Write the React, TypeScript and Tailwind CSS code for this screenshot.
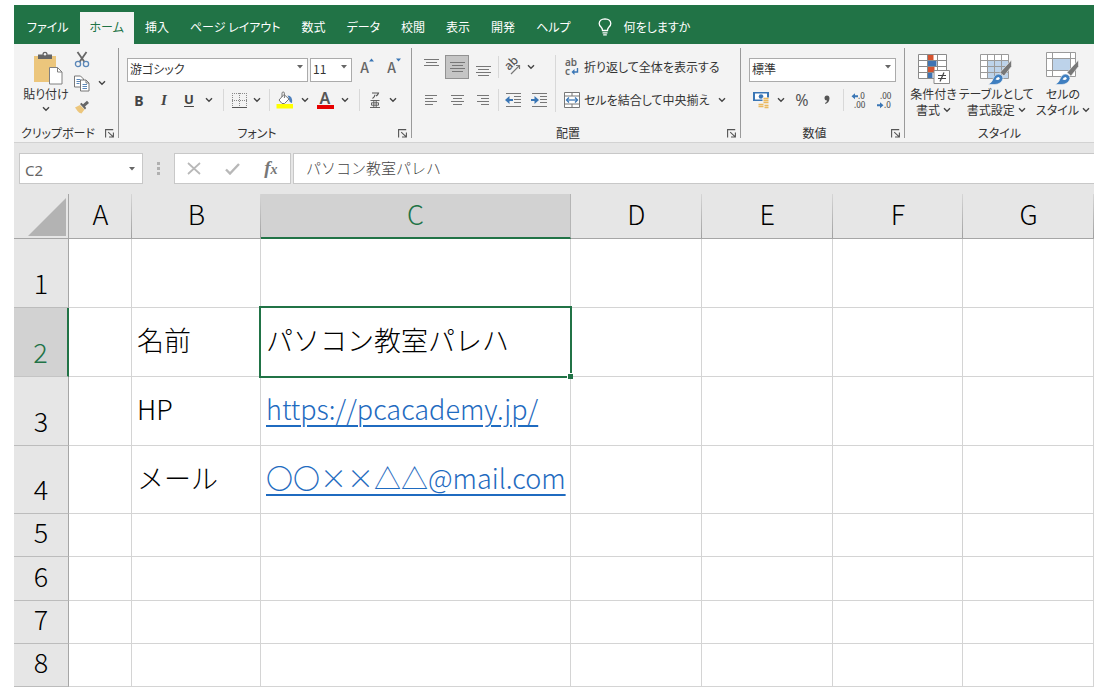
import type { ReactNode } from "react";

const JP = "font-['Noto_Sans_CJK_JP',sans-serif]";

function Chevron() {
  return (
    <svg width="8" height="6" viewBox="0 0 8 6" fill="none" stroke="#444" strokeWidth="1.4" aria-hidden="true">
      <path d="M1 1.2 4 4.2 7 1.2" />
    </svg>
  );
}

function Caret() {
  return (
    <svg width="6" height="4" viewBox="0 0 6 4" fill="#666" aria-hidden="true">
      <path d="M0 0h6L3 3.6z" />
    </svg>
  );
}

type BtnProps = { label: string; width?: string; active?: boolean; children: ReactNode };

function IconButton({ label, width = "w-6", active, children }: BtnProps) {
  return (
    <button
      type="button"
      aria-label={label}
      className={`flex h-6 shrink-0 items-center justify-center ${width} ${active ? "border border-[#929292] bg-[#c5c5c5]" : ""}`}
    >
      {children}
    </button>
  );
}

function MenuArrow({ label, width = "w-4" }: { label: string; width?: string }) {
  return (
    <IconButton label={label} width={width}>
      <Chevron />
    </IconButton>
  );
}

function Separator({ width = "w-2", height = "h-[22px]" }: { width?: string; height?: string }) {
  return (
    <span className={`flex shrink-0 justify-center ${width}`}>
      <span className={`w-px bg-[#d8d8d8] ${height}`} />
    </span>
  );
}

function Combo({ label, value, width, options }: { label: string; value: string; width: string; options: string[] }) {
  return (
    <span className={`relative block h-6 ${width}`}>
      <select
        aria-label={label}
        defaultValue={value}
        className="h-full w-full appearance-none border border-[#ababab] bg-white pr-4 pb-px pl-[2px] text-[12px] leading-5 text-[#333]"
      >
        {options.map((o) => (
          <option key={o}>{o}</option>
        ))}
      </select>
      <span className="pointer-events-none absolute top-[10px] right-[5px]">
        <Caret />
      </span>
    </span>
  );
}

function Launcher({ label }: { label: string }) {
  return (
    <button type="button" aria-label={label} className="flex h-4 w-4 shrink-0 items-center justify-center">
      <svg width="10" height="9" viewBox="0 0 10 9" fill="none" stroke="#555" strokeWidth="1.1" aria-hidden="true">
        <path d="M.6 8.4V.6H8.2M3.2 3.2 8 7.6M8.4 3.6V8H4" />
      </svg>
    </button>
  );
}

function Group({ title, width, launcher = true, children }: { title: string; width: string; launcher?: boolean; children: ReactNode }) {
  return (
    <section aria-label={title} className={`flex h-[98px] shrink-0 flex-col ${width}`}>
      <div className="h-[81px]">{children}</div>
      <div className="flex h-4 items-center">
        <h2 className="flex-1 text-center text-[12px] leading-4 text-[#333]">{title}</h2>
        {launcher && <Launcher label={`${title}の詳細設定`} />}
      </div>
    </section>
  );
}

function GroupDivider() {
  return <span className="mt-1 h-[90px] w-px shrink-0 bg-[#9a9a9a]" />;
}

function PasteIcon() {
  return (
    <svg width="30" height="34" viewBox="0 0 30 34" aria-hidden="true">
      <path d="M1 5h22v26H1z" fill="#ecc67c" />
      <path d="M5 3.5h4.5V2.6Q9.500.8 12 .8t2.500 1.800v.9H19V8H5z" fill="#666" />
      <circle cx="12" cy="3.200" r="1.200" fill="#f3f3f3" />
      <path d="M16.500 16.500h8l4.500 4.500v12h-12.500z" fill="#fff" stroke="#808080" />
      <path d="M24.500 16.500V21H29" fill="none" stroke="#808080" />
    </svg>
  );
}

function CutIcon() {
  return (
    <svg width="16" height="17" viewBox="0 0 16 17" fill="none" aria-hidden="true">
      <path d="M3.500 1 10.500 11M12.500 1 5.500 11" stroke="#666" strokeWidth="1.800" />
      <circle cx="4" cy="13" r="2.600" stroke="#5b87b8" strokeWidth="1.300" />
      <circle cx="12" cy="13" r="2.600" stroke="#5b87b8" strokeWidth="1.300" />
    </svg>
  );
}

function CopyIcon() {
  return (
    <svg width="16" height="17" viewBox="0 0 16 17" aria-hidden="true">
      <path d="M.5 1h6l3 3v8h-9z" fill="#fff" stroke="#777" />
      <path d="M2.500 4.500h4M2.500 6.500h4M2.500 8.500h3" stroke="#5b87b8" />
      <path d="M6.500 5h5.500l3 3v8H6.500z" fill="#fff" stroke="#777" />
      <path d="M12 5v3h3" fill="none" stroke="#777" />
      <path d="M8.500 9.500h4.500M8.500 11.500h4.500M8.500 13.500h4.500" stroke="#5b87b8" />
    </svg>
  );
}

function PainterIcon() {
  return (
    <svg width="16" height="14" viewBox="0 0 16 14" aria-hidden="true">
      <path d="M1 7.500 6 5l4.500 4.500-3 4Q5 13 3.500 11z" fill="#ecc67c" />
      <path d="m6 4 1.500-1.200L9 4.200 13 .8 15 3l-4 3.500 1.200 1.500L11 9.500z" fill="#666" />
    </svg>
  );
}

function GrowIcon({ down }: { down?: boolean }) {
  return (
    <span className="flex items-start pb-1">
      <span className="pt-[3px] text-[14px] leading-4 font-medium text-[#666]">A</span>
      <svg width="5" height="4" viewBox="0 0 5 4" className="mt-[2px]" fill="#3a76b5" aria-hidden="true">
        <path d={down ? "M0 .5h5L2.500 3.500z" : "M0 3.500h5L2.500.5z"} />
      </svg>
    </span>
  );
}

function BordersIcon() {
  return (
    <svg width="15" height="15" viewBox="0 0 15 15" fill="none" aria-hidden="true">
      <path d="M.5 0v14M14.500 0v14M7.500 0v14M0 .5h15M0 7.500h15" stroke="#8a8a8a" strokeDasharray="1 1" />
      <path d="M0 14.500h15" stroke="#555" />
    </svg>
  );
}

function FillIcon() {
  return (
    <svg width="18" height="18" viewBox="0 0 18 18" fill="none" aria-hidden="true">
      <path d="M8 3.500 13 8 8.500 12.500H6L3 9z" fill="#fff" stroke="#777" />
      <path d="M6 6V2.200Q6 1 7.200 1T8.400 2.200V7" stroke="#777" />
      <path d="M11.500 4.500q5.500 0 4.500 7.500-3-.5-3-4.500z" fill="#4f81bd" />
      <path d="M.5 13h16.500v4.500H.5z" fill="#ffff00" />
    </svg>
  );
}

function AlignIcon({ rows, y }: { rows: [number, number][]; y: number }) {
  return (
    <svg width="15" height="22" viewBox="0 0 15 22" stroke="#777" aria-hidden="true">
      {rows.map(([x1, x2], i) => (
        <path key={i} d={`M${x1} ${y + i * 3 + 0.5}H${x2}`} />
      ))}
    </svg>
  );
}

function OrientationIcon() {
  return (
    <svg width="18" height="18" viewBox="0 0 18 18" className="overflow-visible" fill="none" aria-hidden="true">
      <text x="0" y="0" transform="translate(5 13) rotate(-45)" fontSize="12" fontWeight="500" fill="#555" fontFamily="Noto Sans">ab</text>
      <path d="M7 16 15.500 7.500M12 7.500h3.500V11" stroke="#777" strokeWidth="1.200" />
    </svg>
  );
}

function IndentIcon({ inward }: { inward?: boolean }) {
  return (
    <svg width="17" height="15" viewBox="0 0 17 15" fill="none" aria-hidden="true">
      <path d="M1 .5h15M9 3.500h7M9 6.500h7M9 9.500h7M1 13.500h15" stroke="#777" />
      <path
        d={inward ? "M0 6h3.500V3L8 7l-4.500 4V8H0z" : "M8 6H4.500V3L0 7l4.500 4V8H8z"}
        fill="#3a76b5"
      />
    </svg>
  );
}

function WrapIcon() {
  return (
    <svg width="16" height="18" viewBox="0 0 16 18" className="overflow-visible" fill="none" aria-hidden="true">
      <text x="1" y="8" fontSize="10" fontWeight="600" fill="#666" fontFamily="Noto Sans">ab</text>
      <text x="1" y="17" fontSize="10" fontWeight="600" fill="#666" fontFamily="Noto Sans">c</text>
      <path d="M13.500 10v4H9" stroke="#3a76b5" strokeWidth="1.400" />
      <path d="M10.500 11 7.500 14l3 3z" fill="#3a76b5" />
    </svg>
  );
}

function MergeIcon() {
  return (
    <svg width="16" height="16" viewBox="0 0 16 16" fill="none" aria-hidden="true">
      <path d="M.5.5h15v15H.5zM.5 4h15M.5 12h15M8 .5V4M8 12v3.500" fill="#fff" stroke="#777" />
      <path d="M3 8h10" stroke="#3a76b5" strokeWidth="1.300" />
      <path d="M5 5.500 2.500 8 5 10.500M11 5.500 13.500 8 11 10.500" stroke="#3a76b5" strokeWidth="1.300" />
    </svg>
  );
}

function CurrencyIcon() {
  return (
    <svg width="18" height="18" viewBox="0 0 18 18" aria-hidden="true">
      <path d="M1 1h16v9H1z" fill="#3a76b5" />
      <path d="M3 2.500h12v6H3z" fill="#fff" />
      <path d="M1 1h3.500L1 4zM17 1h-3.500L17 4zM1 10V7l3.500 3z" fill="#3a76b5" />
      <circle cx="9" cy="5.500" r="2.300" fill="#3a76b5" />
      <path d="M10.500 6.500H17v11H6V12h4.500z" fill="#f3f3f3" />
      <path d="M11.500 7.500h5M11.500 9.500h5M11.500 11.500h5M6.500 13.500h5M6.500 15.500h5M12.500 14.500h4M12.500 16.500h4" stroke="#ecb95d" strokeWidth="1.300" />
    </svg>
  );
}

function DecimalIcon({ less }: { less?: boolean }) {
  return (
    <svg width="16" height="18" viewBox="0 0 16 18" className="overflow-visible" fill="#555" fontFamily="Noto Sans" fontSize="8" fontWeight="500" aria-hidden="true">
      <text x={less ? "3" : "7"} y="8">{less ? ".00" : ".0"}</text>
      <text x={less ? "7" : "3"} y="17">{less ? ".0" : ".00"}</text>
      <path
        d={less ? "M0 13.200h3v-2l3.500 3-3.500 3v-2H0z" : "M7 4.200H4v-2l-3.500 3 3.500 3v-2h3z"}
        fill="#3a76b5"
      />
    </svg>
  );
}

function RubyIcon() {
  return (
    <svg width="12" height="17" viewBox="0 0 12 17" fill="none" stroke="#555" aria-hidden="true">
      <path d="M3 1h6.500Q9 3 7 4M6 2.800Q5.800 5 3.500 6.500" strokeWidth="1.100" />
      <path d="M1.500 8.500h9M1 15.500h10M2.500 10.800h7v2.400h-7zM4.800 8.500v7M7.200 8.500v7" strokeWidth=".9" />
    </svg>
  );
}

function ConditionalIcon() {
  return (
    <svg width="32" height="31" viewBox="0 0 32 31" fill="none" aria-hidden="true">
      <path d="M.5.5h28v24H.5z" fill="#fff" />
      <path d="M9.500 0h6v6h-6zM9.500 13h7v5.500h-7z" fill="#d6532f" />
      <path d="M9.500 7h9v5.500h-9zM9.500 19h5v5.500h-5z" fill="#3f74b3" />
      <path d="M.5.5h28v24H.5zM.5 6.500h28M.5 12.500h28M.5 18.500h28M9.500.5v24M19.500.5v24" stroke="#8a8a8a" />
      <path d="M16 16.500h15.500v13H16z" fill="#fff" stroke="#8a8a8a" />
      <path d="M20 21.500h8M20 24.500h8M26 18.500 22 27.500" stroke="#444" strokeWidth="1.200" />
    </svg>
  );
}

function Brush() {
  return (
    <g>
      <path d="M31.500 6v6.500L24 22l-4-3.500z" fill="#777" stroke="#f3f3f3" strokeWidth=".6" />
      <path d="M18 20q4.500 0 5 4.500-1.500 5.500-8 6H8q4-2 5-5.500 1.500-4.500 5-5z" fill="#3f7fc0" stroke="#f3f3f3" strokeWidth=".6" />
      <path d="M15.500 25.500q1-2.500 3-2.500 1.300.5 1.300 1.800-1 1.200-2.300 1.200z" fill="#fff" />
    </g>
  );
}

function TableStyleIcon() {
  return (
    <svg width="32" height="31" viewBox="0 0 32 31" fill="none" aria-hidden="true">
      <path d="M.5.5h28v24H.5z" fill="#fff" />
      <path d="M7.500 6.500h21v18h-21z" fill="#bdd3ea" />
      <path d="M.5.5h28v24H.5zM.5 6.500h28M.5 12.500h28M.5 18.500h28M7.500.5v24M14.500.5v24M21.500.5v24" stroke="#9a9a9a" />
      <Brush />
    </svg>
  );
}

function CellStyleIcon() {
  return (
    <svg width="33" height="33" viewBox="0 0 33 33" fill="none" aria-hidden="true">
      <path d="M.5.5h29v24H.5z" fill="#fff" />
      <path d="M.5.500h29v24H.5zM.5 6.500h29M.5 18.500h29M6.500.5v24M24.500.5v24" stroke="#9a9a9a" />
      <path d="M7 7h17v11H7z" fill="#bdd3ea" />
      <g transform="translate(1 2)">
        <Brush />
      </g>
    </svg>
  );
}

const tabs = ["ファイル", "ホーム", "挿入", "ページ レイアウト", "数式", "データ", "校閲", "表示", "開発", "ヘルプ"];

function TabBar() {
  return (
    <nav aria-label="リボン" className="flex h-[39px] items-end gap-px bg-[#217346] pl-[3px] text-[12px] text-white">
      {tabs.map((t) => (
        <button
          key={t}
          type="button"
          aria-current={t === "ホーム" ? "page" : undefined}
          className={`h-8 px-[10px] pb-[2px] whitespace-nowrap ${t === "ホーム" ? "bg-[#f3f3f3] text-[#217346]" : ""}`}
        >
          {t}
        </button>
      ))}
      <button type="button" className="flex h-8 items-center gap-3 pb-[2px] pl-4 whitespace-nowrap">
        <svg width="14" height="18" viewBox="0 0 14 18" fill="none" stroke="#fff" strokeWidth="1.300" aria-hidden="true">
          <path d="M4.500 12.500Q4.500 10.500 3 9 1.200 7.500 1.200 5.500 1.500 1 7 .8q5.500.2 5.800 4.700 0 2-1.800 3.500-1.500 1.500-1.500 3.500zM4.500 14.800h5M5.200 16.900h3.600" />
        </svg>
        何をしますか
      </button>
    </nav>
  );
}

function StyleButton({ icon, lines }: { icon: ReactNode; lines: [string, string] }) {
  return (
    <button type="button" className="flex flex-col items-center text-[12px] leading-4 whitespace-nowrap text-[#333]">
      <span className="flex h-[34px] items-end">{icon}</span>
      <span className="mt-px">{lines[0]}</span>
      <span className="flex items-center gap-[3px]">
        {lines[1]}
        <Chevron />
      </span>
    </button>
  );
}

function Ribbon() {
  return (
    <div className="flex overflow-hidden border-b border-[#d2d2d2] bg-[#f3f3f3]">
      <Group title="クリップボード" width="w-[104px]">
        <div className="flex">
          <button type="button" className="ml-2 flex w-12 flex-col items-center pt-[7px] text-[12px] leading-4 whitespace-nowrap text-[#333]">
            <span className="pl-1"><PasteIcon /></span>
            <span className="mt-px">貼り付け</span>
            <span className="mt-1"><Chevron /></span>
          </button>
          <div className="flex flex-col pt-[3px]">
            <IconButton label="切り取り"><CutIcon /></IconButton>
            <div className="flex">
              <IconButton label="コピー"><CopyIcon /></IconButton>
              <MenuArrow label="コピーのオプション" />
            </div>
            <IconButton label="書式のコピー"><PainterIcon /></IconButton>
          </div>
        </div>
      </Group>
      <GroupDivider />
      <Group title="フォント" width="w-[292px]">
        <div className="flex flex-col gap-[9px] pt-[11px] pl-2">
          <div className="flex items-center gap-[2px]">
            <Combo label="フォント" value="游ゴシック" width="w-[181px]" options={["游ゴシック", "メイリオ"]} />
            <Combo label="フォント サイズ" value="11" width="w-[42px]" options={["9", "10", "11", "12", "14"]} />
            <IconButton label="フォント サイズの拡大" width="w-[26px]"><GrowIcon /></IconButton>
            <IconButton label="フォント サイズの縮小"><GrowIcon down /></IconButton>
          </div>
          <div className="flex items-center text-[#444]">
            <IconButton label="太字"><span className="font-['Noto_Sans'] text-[14px] font-bold">B</span></IconButton>
            <IconButton label="斜体" width="w-[26px]"><span className="font-['Liberation_Serif'] text-[15px] font-bold italic">I</span></IconButton>
            <IconButton label="下線"><span className="font-['Noto_Sans'] text-[13px] font-bold underline underline-offset-2">U</span></IconButton>
            <MenuArrow label="下線のオプション" />
            <Separator width="w-3" />
            <IconButton label="罫線" width="w-5"><BordersIcon /></IconButton>
            <MenuArrow label="罫線のオプション" />
            <Separator />
            <IconButton label="塗りつぶしの色"><FillIcon /></IconButton>
            <MenuArrow label="塗りつぶしのオプション" />
            <IconButton label="フォントの色">
              <span className="flex flex-col items-center">
                <span className="font-['Noto_Sans'] text-[16px] leading-[14px] font-semibold text-[#555]">A</span>
                <span className="h-1 w-[17px] bg-[#e60000]" />
              </span>
            </IconButton>
            <MenuArrow label="フォントの色のオプション" />
            <Separator width="w-3" />
            <IconButton label="ふりがな" width="w-5"><RubyIcon /></IconButton>
            <MenuArrow label="ふりがなのオプション" />
          </div>
        </div>
      </Group>
      <GroupDivider />
      <Group title="配置" width="w-[328px]">
        <div className="flex pt-[11px] pl-[7px]">
          <div className="flex flex-col gap-[9px]">
            <div className="flex gap-[2px]">
              <IconButton label="上揃え"><AlignIcon y={3} rows={[[0, 15], [2, 13], [0, 15]]} /></IconButton>
              <IconButton label="上下中央揃え" active><AlignIcon y={6} rows={[[0, 15], [2, 13], [0, 15], [2, 13]]} /></IconButton>
              <IconButton label="下揃え"><AlignIcon y={10} rows={[[0, 15], [2, 13], [0, 15], [2, 13]]} /></IconButton>
            </div>
            <div className="flex gap-[2px]">
              <IconButton label="左揃え"><AlignIcon y={6} rows={[[1, 13], [1, 9], [1, 13], [1, 9]]} /></IconButton>
              <IconButton label="中央揃え"><AlignIcon y={6} rows={[[1, 14], [3, 12], [1, 14], [3, 12]]} /></IconButton>
              <IconButton label="右揃え"><AlignIcon y={6} rows={[[1, 13], [5, 13], [1, 13], [5, 13]]} /></IconButton>
            </div>
          </div>
          <div className="flex flex-col gap-[9px]">
            <div className="flex items-center">
              <Separator width="w-[6px]" />
              <IconButton label="方向"><OrientationIcon /></IconButton>
              <MenuArrow label="方向のオプション" width="w-3" />
            </div>
            <div className="flex items-center">
              <Separator width="w-[6px]" />
              <IconButton label="インデントを減らす"><IndentIcon /></IconButton>
              <span className="w-[2px]" />
              <IconButton label="インデントを増やす"><IndentIcon inward /></IconButton>
            </div>
          </div>
          <Separator height="h-[57px]" />
          <div className="flex flex-1 flex-col gap-[9px] pl-[5px] text-[12px] whitespace-nowrap text-[#333]">
            <button type="button" className="flex h-6 items-center gap-1">
              <WrapIcon />
              折り返して全体を表示する
            </button>
            <div className="flex items-center justify-between pr-[10px]">
              <button type="button" className="flex h-6 items-center gap-1">
                <MergeIcon />
                セルを結合して中央揃え
              </button>
              <MenuArrow label="結合のオプション" />
            </div>
          </div>
        </div>
      </Group>
      <GroupDivider />
      <Group title="数値" width="w-[163px]">
        <div className="flex flex-col gap-[9px] pt-[11px] pl-2">
          <Combo label="表示形式" value="標準" width="w-[147px]" options={["標準", "数値", "通貨"]} />
          <div className="flex items-center text-[#555]">
            <IconButton label="通貨表示形式"><CurrencyIcon /></IconButton>
            <MenuArrow label="通貨のオプション" />
            <IconButton label="パーセント スタイル" width="w-[26px]"><span className="font-['Noto_Sans'] text-[16px]">%</span></IconButton>
            <IconButton label="桁区切りスタイル">
              <svg width="6" height="10" viewBox="0 0 6 10" fill="#555" aria-hidden="true">
                <path d="M3 .5q2.500.2 2.500 3Q5.300 7.500 1.500 9L1 8q2-1 2-2.500Q.5 5.500.5 3T3 .5z" />
              </svg>
            </IconButton>
            <Separator />
            <IconButton label="小数点以下の表示桁数を増やす"><DecimalIcon /></IconButton>
            <span className="w-[2px]" />
            <IconButton label="小数点以下の表示桁数を減らす"><DecimalIcon less /></IconButton>
          </div>
        </div>
      </Group>
      <GroupDivider />
      <Group title="スタイル" width="w-[189px]" launcher={false}>
        <div className="flex justify-end gap-[2px] pt-[7px] pr-1">
          <StyleButton icon={<ConditionalIcon />} lines={["条件付き", "書式"]} />
          <StyleButton icon={<TableStyleIcon />} lines={["テーブルとして", "書式設定"]} />
          <StyleButton icon={<CellStyleIcon />} lines={["セルの", "スタイル"]} />
        </div>
      </Group>
    </div>
  );
}

function FormulaBar() {
  return (
    <div className="flex h-[51px] items-start bg-[#e6e6e6] pt-[10px] pl-[5px]">
      <div className="flex h-[31px] w-[124px] items-center border border-[#c8c8c8] bg-white pr-[6px]">
        <input
          aria-label="名前ボックス"
          defaultValue="C2"
          className="h-full w-full min-w-0 bg-transparent pt-[2px] pl-[5px] font-['Noto_Sans',sans-serif] text-[15px] text-[#666]"
        />
        <button type="button" aria-label="名前の一覧" className="flex h-5 w-2 shrink-0 items-center justify-center">
          <Caret />
        </button>
      </div>
      <span className="flex h-[31px] w-[31px] flex-col items-center justify-center gap-[2px]">
        <span className="h-[3px] w-[3px] bg-[#b0b0b0]" />
        <span className="h-[3px] w-[3px] bg-[#b0b0b0]" />
        <span className="h-[3px] w-[3px] bg-[#b0b0b0]" />
      </span>
      <div className="flex h-[31px] w-[117px] items-center border border-[#c8c8c8] bg-white">
        <button type="button" aria-label="キャンセル" className="flex flex-1 justify-center">
          <svg width="14" height="13" viewBox="0 0 14 13" stroke="#b8b8b8" strokeWidth="1.700" aria-hidden="true">
            <path d="M1 1 13 12M13 1 1 12" />
          </svg>
        </button>
        <button type="button" aria-label="入力" className="flex flex-1 justify-center">
          <svg width="15" height="12" viewBox="0 0 15 12" fill="none" stroke="#b8b8b8" strokeWidth="2.400" aria-hidden="true">
            <path d="M1 6.500 5 10.500 14 1" />
          </svg>
        </button>
        <button
          type="button"
          aria-label="関数の挿入"
          className="flex-1 font-['Liberation_Serif',serif] text-[19px] leading-6 font-bold text-[#777] italic"
        >
          f<span className="text-[14px]">x</span>
        </button>
      </div>
      <input
        aria-label="数式バー"
        defaultValue="パソコン教室パレハ"
        className="ml-[2px] h-[31px] min-w-0 flex-1 border-y border-l border-[#c8c8c8] bg-white pb-[2px] pl-3 text-[15px] font-light text-[#444] [font-feature-settings:normal]"
      />
    </div>
  );
}

const columns = ["A", "B", "C", "D", "E", "F", "G"];

const rows: { n: number; height: string; cells: Record<string, string> }[] = [
  { n: 1, height: "h-[69px]", cells: {} },
  { n: 2, height: "h-[69px]", cells: { B: "名前", C: "パソコン教室パレハ" } },
  { n: 3, height: "h-[69px]", cells: { B: "HP", C: "https://pcacademy.jp/" } },
  { n: 4, height: "h-[68px]", cells: { B: "メール", C: "〇〇××△△@mail.com" } },
  { n: 5, height: "h-[43px]", cells: {} },
  { n: 6, height: "h-[44px]", cells: {} },
  { n: 7, height: "h-[43px]", cells: {} },
  { n: 8, height: "h-[43px]", cells: {} },
];

const links: Record<string, string> = {
  C3: "https://pcacademy.jp/",
  C4: "mailto:〇〇××△△@mail.com",
};

function Cell({ id, text }: { id: string; text?: string }) {
  const selected = id === "C2";
  return (
    <td className="relative border-r border-b border-[#d4d4d4] p-0 pb-1 pl-[5px] align-middle whitespace-nowrap">
      {links[id] ? (
        <a href={links[id]} className="text-[#1f6bc0] underline decoration-2 underline-offset-[5px]">
          {text}
        </a>
      ) : (
        text
      )}
      {selected && (
        <span className="pointer-events-none absolute -top-[2px] -right-[2px] -bottom-[2px] -left-[2px] z-10 border-2 border-[#217346]">
          <span className="absolute -right-[3px] -bottom-[3px] h-[6px] w-[6px] border-t border-l border-white bg-[#217346]" />
        </span>
      )}
    </td>
  );
}

function Sheet() {
  return (
    <table className="w-full table-fixed border-separate border-spacing-0 bg-white text-[27px] leading-8 font-light text-black [font-feature-settings:normal]">
      <colgroup>
        <col className="w-[55px]" />
        <col className="w-[63px]" />
        <col className="w-[129px]" />
        <col className="w-[310px]" />
        <col />
        <col />
        <col />
        <col />
      </colgroup>
      <thead>
        <tr className="h-[45px]">
          <td className="border-r border-b border-[#a6a6a6] bg-[#e6e6e6] p-0">
            <button type="button" aria-label="すべて選択" className="flex w-full justify-end pt-px pr-[2px]">
              <svg width="38" height="38" viewBox="0 0 38 38" fill="#b3b3b3" aria-hidden="true">
                <path d="M38 0v38H0z" />
              </svg>
            </button>
          </td>
          {columns.map((c) => (
            <th
              key={c}
              scope="col"
              className={
                c === "C"
                  ? "border-r border-b-2 border-r-[#b5b5b5] border-b-[#217346] bg-[#d2d2d2] p-0 pb-[3px] font-light text-[#217346]"
                  : "border-b border-[#a6a6a6] bg-[#e6e6e6] bg-linear-to-b from-[#d6d6d6] to-[#a0a0a0] bg-[length:1px_100%] bg-right bg-no-repeat p-0 pb-1 font-light"
              }
            >
              {c}
            </th>
          ))}
        </tr>
      </thead>
      <tbody>
        {rows.map((r) => (
          <tr key={r.n} className={r.height}>
            <th
              scope="row"
              className={
                r.n === 2
                  ? "border-r-2 border-b border-r-[#217346] border-b-[#c4c4c4] bg-[#d2d2d2] p-0 pb-2 align-bottom font-light text-[#217346]"
                  : "border-r border-b border-r-[#a6a6a6] border-b-[#bcbcbc] bg-[#e6e6e6] p-0 pb-2 align-bottom font-light"
              }
            >
              {r.n}
            </th>
            {columns.map((c) => (
              <Cell key={c} id={`${c}${r.n}`} text={r.cells[c]} />
            ))}
          </tr>
        ))}
      </tbody>
    </table>
  );
}

export default function App() {
  return (
    <main className={`bg-white px-[14px] pt-[5px] ${JP} [font-feature-settings:'palt']`}>
      <TabBar />
      <Ribbon />
      <FormulaBar />
      <Sheet />
    </main>
  );
}
